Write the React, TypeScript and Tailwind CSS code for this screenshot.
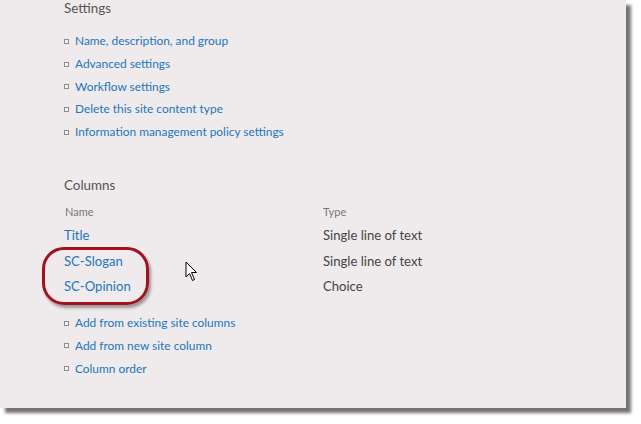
import React from 'react';

const settingsLinks = [
  'Name, description, and group',
  'Advanced settings',
  'Workflow settings',
  'Delete this site content type',
  'Information management policy settings',
];

const columns = [
  { name: 'Title', type: 'Single line of text' },
  { name: 'SC-Slogan', type: 'Single line of text' },
  { name: 'SC-Opinion', type: 'Choice' },
];

const columnLinks = ['Add from existing site columns', 'Add from new site column', 'Column order'];

function Bullet() {
  return <span className="inline-block w-[5px] h-[5px] border border-[#8d8d8d] bg-[#f4f2f3] mr-[6px] shrink-0" />;
}

function LinkItem({ label }: { label: string }) {
  return (
    <div className="flex items-center h-[22.7px]">
      <Bullet />
      <span className="text-[#2277ba] text-[11.9px]">{label}</span>
    </div>
  );
}

function Cursor() {
  return (
    <svg width="14" height="22" viewBox="0 0 14 22" className="absolute left-[185px] top-[261px]">
      <path d="M1 1 L1 16 L4.5 12.5 L7.5 19.5 L9.5 18.5 L6.5 11.5 L11.5 11.5 Z" fill="#fff" stroke="#000" strokeWidth="1" strokeLinejoin="round" />
    </svg>
  );
}

export default function App() {
  return (
    <div className="w-[641px] h-[424px] bg-white relative overflow-hidden" style={{ fontFamily: 'Lato, "Open Sans", sans-serif' }}>
      <div className="w-[626px] h-[408px] bg-[#efeaec] shadow-[5px_5px_3px_rgba(0,0,0,0.55)] pl-[64px] relative">
        {/* Settings */}
        <div className="text-[13.4px] text-[#555] leading-[17px]">Settings</div>
        <div className="mt-[13px]">
          {settingsLinks.map((l) => (
            <LinkItem key={l} label={l} />
          ))}
        </div>

        {/* Columns */}
        <div className="text-[13.4px] text-[#555] leading-[18px] mt-[33px]">Columns</div>
        <div className="mt-[10px] flex text-[11px] text-[#777] leading-[16px]">
          <div className="w-[259px] pl-[1px]">Name</div>
          <div>Type</div>
        </div>
        <div className="mt-[3px]">
          {columns.map((c) => (
            <div key={c.name} className="flex items-center h-[25.5px] text-[13.1px]">
              <div className="w-[259px] text-[#2277ba]">{c.name}</div>
              <div className="text-[#444]">{c.type}</div>
            </div>
          ))}
        </div>
        <div className="mt-[12px]">
          {columnLinks.map((l) => (
            <LinkItem key={l} label={l} />
          ))}
        </div>

        {/* red highlight */}
        <div className="absolute left-[42px] top-[247px] w-[107px] h-[58px] rounded-[22px] border-[3px] border-[#a3121c] shadow-[2px_3px_3px_rgba(0,0,0,0.35)]" />
        <Cursor />
      </div>
    </div>
  );
}
